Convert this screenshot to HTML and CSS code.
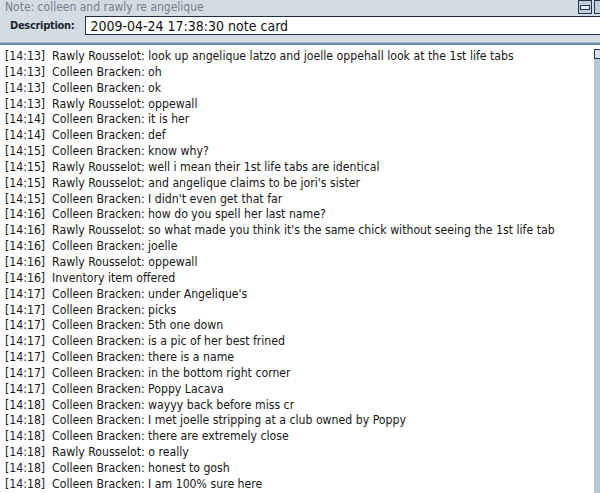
FILE: index.html
```html
<!DOCTYPE html>
<html lang="en">
<head>
    <meta charset="UTF-8">
    <title>Note</title>
    <link rel="stylesheet" href="styles.css">
</head>
<body>
<div class="window">
    <div class="header">
        <div class="title-row">
            <span class="title">Note: colleen and rawly re angelique</span>
            <div class="win-buttons">
                <span class="win-btn"><span class="min-bar"></span></span>
                <span class="win-btn"></span>
            </div>
        </div>
        <div class="desc-row">
            <label class="desc-label" for="desc">Description:</label>
            <input class="desc-input" id="desc" type="text" value="2009-04-24 17:38:30 note card">
        </div>
    </div>
    <div class="divider"></div>
    <div class="log-area">
        <div class="log">[14:13]  Rawly Rousselot: look up angelique latzo and joelle oppehall look at the 1st life tabs
[14:13]  Colleen Bracken: oh
[14:13]  Colleen Bracken: ok
[14:13]  Rawly Rousselot: oppewall
[14:14]  Colleen Bracken: it is her
[14:14]  Colleen Bracken: def
[14:15]  Colleen Bracken: know why?
[14:15]  Rawly Rousselot: well i mean their 1st life tabs are identical
[14:15]  Rawly Rousselot: and angelique claims to be jori's sister
[14:15]  Colleen Bracken: I didn't even get that far
[14:16]  Colleen Bracken: how do you spell her last name?
[14:16]  Rawly Rousselot: so what made you think it's the same chick without seeing the 1st life tab
[14:16]  Colleen Bracken: joelle
[14:16]  Rawly Rousselot: oppewall
[14:16]  Inventory item offered
[14:17]  Colleen Bracken: under Angelique's
[14:17]  Colleen Bracken: picks
[14:17]  Colleen Bracken: 5th one down
[14:17]  Colleen Bracken: is a pic of her best frined
[14:17]  Colleen Bracken: there is a name
[14:17]  Colleen Bracken: in the bottom right corner
[14:17]  Colleen Bracken: Poppy Lacava
[14:18]  Colleen Bracken: wayyy back before miss cr
[14:18]  Colleen Bracken: I met joelle stripping at a club owned by Poppy
[14:18]  Colleen Bracken: there are extremely close
[14:18]  Rawly Rousselot: o really
[14:18]  Colleen Bracken: honest to gosh
[14:18]  Colleen Bracken: I am 100% sure here</div>
        <div class="scrollbar">
            <span class="scroll-up"></span>
        </div>
    </div>
</div>
</body>
</html>
```

FILE: styles.css
```css
* {
    margin: 0;
    padding: 0;
    box-sizing: border-box;
}

body {
    width: 600px;
    height: 493px;
    overflow: hidden;
    font-family: "DejaVu Sans Condensed", "DejaVu Sans", sans-serif;
    background: #ffffff;
}

.window {
    display: flex;
    flex-direction: column;
    height: 100%;
}

.header {
    background: #d3dbe3;
    height: 42px;
    padding-left: 5px;
}

.title-row {
    display: flex;
    justify-content: space-between;
    height: 15px;
}

.title {
    font-size: 12px;
    color: #76818d;
    line-height: 15px;
}

.win-buttons {
    display: flex;
    gap: 2px;
    margin-right: -8px;
}

.win-btn {
    width: 14px;
    height: 14px;
    border: 1px solid #253650;
    background: #c0cedc;
    display: flex;
    align-items: center;
    justify-content: center;
}

.min-bar {
    width: 10px;
    height: 5px;
    border: 1px solid #253650;
    background: #e8eef4;
}

.desc-row {
    display: flex;
    align-items: center;
    gap: 11px;
    padding-left: 5px;
    margin-top: 1px;
}

.desc-label {
    font-size: 11px;
    font-weight: bold;
    letter-spacing: -0.3px;
    color: #1c2630;
}

.desc-input {
    flex: 1;
    height: 19px;
    border: 1px solid #1e2e46;
    border-right: none;
    padding-left: 4px;
    font-family: inherit;
    font-size: 14px;
    color: #111;
    outline: none;
}

.divider {
    height: 3px;
    background: #6a8db2;
    border-top: 1px solid #a8bdd2;
}

.log-area {
    flex: 1;
    display: flex;
    min-height: 0;
    padding-top: 4px;
}

.log {
    flex: 1;
    white-space: pre;
    font-size: 12.2px;
    line-height: 15.85px;
    color: #161616;
    padding-left: 5px;
    overflow: hidden;
}

.scrollbar {
    width: 6px;
    background: #b7c7d8;
    position: relative;
}

.scroll-up {
    position: absolute;
    left: 0;
    top: 0;
    width: 8px;
    height: 10px;
    border: 1px solid #253650;
    background: #d8e2ec;
}
```
